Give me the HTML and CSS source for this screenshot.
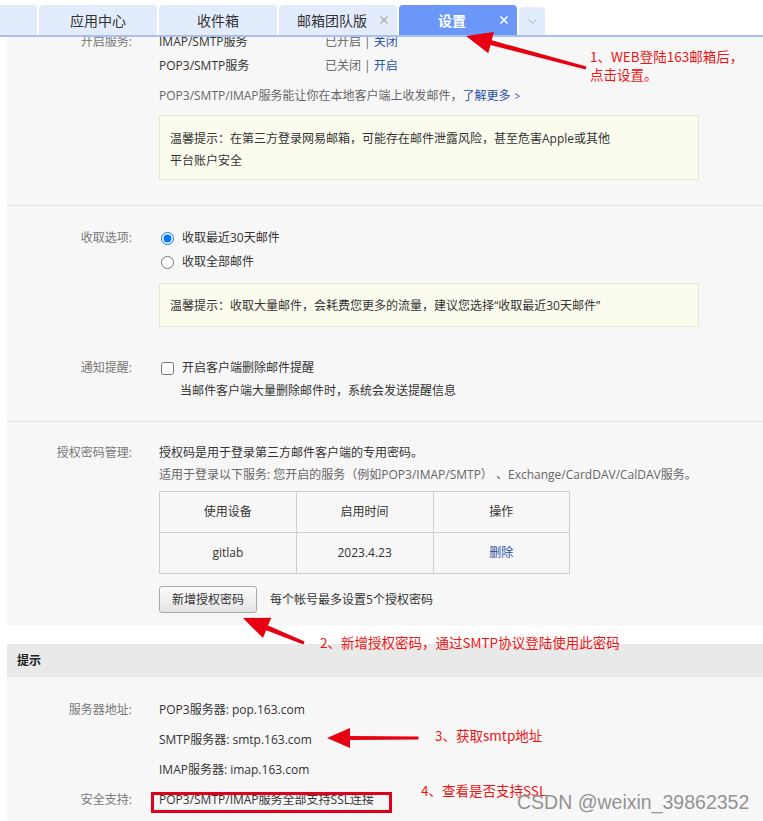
FILE: index.html
```html
<!DOCTYPE html>
<html lang="zh-CN">
<head>
  <meta charset="UTF-8">
  <title>设置 - 客户端授权</title>
  <link rel="stylesheet" href="styles.css">
</head>
<body>
<div class="page">
  <div class="tabbar">
    <div class="tab tab-cut"></div>
    <div class="tab"><span class="tab-name">应用中心</span></div>
    <div class="tab"><span class="tab-name">收件箱</span></div>
    <div class="tab closable">
      <span class="tab-name">邮箱团队版</span>
      <svg class="tab-x" width="8" height="8" viewBox="0 0 8 8"><path d="M0.5 0.5L7.5 7.5M7.5 0.5L0.5 7.5"/></svg>
    </div>
    <div class="tab closable active">
      <span class="tab-name">设置</span>
      <svg class="tab-x" width="8" height="8" viewBox="0 0 8 8"><path d="M0.5 0.5L7.5 7.5M7.5 0.5L0.5 7.5"/></svg>
    </div>
    <div class="tab-more">
      <svg width="9" height="5" viewBox="0 0 9 5"><path d="M0.5 0.5L4.5 4.5L8.5 0.5"/></svg>
    </div>
  </div>

  <div class="panel">
    <div class="section sec-service">
      <div class="row">
        <div class="label">开启服务:</div>
        <div class="value">
          <div class="svc"><span class="svc-name">IMAP/SMTP服务</span><span class="svc-state">已开启 | <a class="link">关闭</a></span></div>
          <div class="svc"><span class="svc-name">POP3/SMTP服务</span><span class="svc-state">已关闭 | <a class="link">开启</a></span></div>
          <div class="desc">POP3/SMTP/IMAP服务能让你在本地客户端上收发邮件，<a class="link">了解更多</a><span class="more">&gt;</span></div>
          <div class="tip tip-risk">温馨提示：在第三方登录网易邮箱，可能存在邮件泄露风险，甚至危害Apple或其他<br>平台账户安全</div>
        </div>
      </div>
    </div>

    <div class="section sec-fetch">
      <div class="row">
        <div class="label">收取选项:</div>
        <div class="value">
          <label class="opt"><input type="radio" name="fetch" checked>收取最近30天邮件</label>
          <label class="opt"><input type="radio" name="fetch">收取全部邮件</label>
          <div class="tip tip-fetch">温馨提示：收取大量邮件，会耗费您更多的流量，建议您选择“收取最近30天邮件”</div>
        </div>
      </div>
      <div class="row notify-row">
        <div class="label">通知提醒:</div>
        <div class="value">
          <label class="opt"><input type="checkbox">开启客户端删除邮件提醒</label>
          <div class="hint">当邮件客户端大量删除邮件时，系统会发送提醒信息</div>
        </div>
      </div>
    </div>

    <div class="section sec-auth">
      <div class="row">
        <div class="label">授权密码管理:</div>
        <div class="value">
          <div>授权码是用于登录第三方邮件客户端的专用密码。</div>
          <div class="muted">适用于登录以下服务: 您开启的服务（例如POP3/IMAP/SMTP） 、Exchange/CardDAV/CalDAV服务。</div>
          <table class="auth-table">
            <tr><td>使用设备</td><td>启用时间</td><td>操作</td></tr>
            <tr><td>gitlab</td><td>2023.4.23</td><td><a class="link">删除</a></td></tr>
          </table>
          <div class="add-row">
            <button class="btn">新增授权密码</button>
            <span>每个帐号最多设置5个授权密码</span>
          </div>
        </div>
      </div>
    </div>
  </div>

  <div class="tips-head">提示</div>
  <div class="panel sec-server">
    <div class="row">
      <div class="label">服务器地址:</div>
      <div class="value">
        <div>POP3服务器: pop.163.com</div>
        <div>SMTP服务器: smtp.163.com</div>
        <div>IMAP服务器: imap.163.com</div>
      </div>
    </div>
    <div class="row">
      <div class="label">安全支持:</div>
      <div class="value">POP3/SMTP/IMAP服务全部支持SSL连接</div>
    </div>
  </div>

  <!-- annotations drawn over the screenshot -->
  <svg class="arrows" width="763" height="821" viewBox="0 0 763 821">
    <polygon points="586.4,66.6 491.7,40.3 493.9,32.1 466,36 488.3,53.3 490.5,45.1 585.6,69.4"/>
    <polygon points="304.6,641.6 268,625.6 271.3,617.7 243,618 262.9,638.1 266.2,630.2 303.4,644.4"/>
    <polygon points="418.5,736.5 350,736 350,728 327,738 350,748 350,740 418.5,739.5"/>
  </svg>
  <div class="note note-1">1、WEB登陆163邮箱后，<br>点击设置。</div>
  <div class="note note-2">2、新增授权密码，通过SMTP协议登陆使用此密码</div>
  <div class="note note-3">3、获取smtp地址</div>
  <div class="note note-4">4、查看是否支持SSL</div>
  <div class="mark-box"></div>
  <div class="watermark">CSDN @weixin_39862352</div>
</div>
</body>
</html>
```

FILE: styles.css
```css
body {
  margin: 0;
  background: #fff;
  font-family: "Open Sans", "Noto Sans CJK SC", sans-serif;
  font-size: 12px;
  color: #333;
}
.page {
  position: relative;
  width: 763px;
  height: 821px;
  overflow: hidden;
}

/* tab bar, lies over the scrolled content */
.tabbar {
  position: absolute;
  top: 0;
  left: 0;
  right: 0;
  height: 35px;
  background: #fff;
  border-bottom: 2px solid #a8c0ec;
  display: flex;
  align-items: flex-end;
  gap: 2px;
  z-index: 2;
}
.tab {
  width: 118px;
  height: 30px;
  flex-shrink: 0;
  display: flex;
  align-items: center;
  background: #e3ecfd;
  border-radius: 4px 4px 0 0;
  font-family: "Noto Sans CJK SC", sans-serif;
  font-size: 14px;
  color: #333;
}
.tab-cut {
  width: 37px;
  border-top-left-radius: 0;
}
.tab-name {
  flex: 1;
  text-align: center;
}
.closable .tab-name {
  padding-left: 8px;
}
.tab-x {
  margin: 0 9px 0 3px;
  fill: none;
  stroke: #aaa;
  stroke-width: 1.2;
}
.tab.active {
  background: #6b98f8;
  color: #fff;
  font-weight: bold;
}
.tab.active .tab-x {
  stroke: #fff;
  stroke-width: 1.5;
}
.tab-more {
  width: 26px;
  height: 28px;
  flex-shrink: 0;
  display: flex;
  align-items: center;
  justify-content: center;
  background: #e3ecfd;
  border-radius: 4px 4px 0 0;
}
.tab-more svg {
  fill: none;
  stroke: #9eabc6;
  stroke-width: 1;
}

/* content */
.panel {
  margin-left: 7px;
  background: #f7f7f7;
}
.row {
  display: grid;
  grid-template-columns: 125px 1fr;
  column-gap: 27px;
  line-height: 24px;
}
.label {
  text-align: right;
  color: #777;
}
.link {
  color: #1e4ea6;
  text-decoration: none;
}
.muted {
  color: #666;
}

.sec-service {
  padding: 30px 0 25px;
  border-bottom: 1px solid #e4e4e4;
}
.svc-name {
  display: inline-block;
  width: 166px;
}
.svc-state {
  color: #666;
}
.desc {
  margin-top: 6px;
  color: #666;
}
.more {
  margin-left: 4px;
  font-size: 10px;
  color: #1e4ea6;
}
.tip {
  width: 540px;
  box-sizing: border-box;
  border: 1px solid #e8e7cc;
  background: #fcfcee;
  line-height: 22px;
  color: #333;
}
.tip-risk {
  margin-top: 7px;
  padding: 12px 10px 7px;
}

.sec-fetch {
  padding: 20px 0 19px;
  border-bottom: 1px solid #e4e4e4;
}
.opt {
  display: flex;
  align-items: center;
  height: 24px;
}
.opt input {
  width: 13px;
  height: 13px;
  margin: 0 8px 0 2px;
}
.tip-fetch {
  margin-top: 9px;
  padding: 11px 10px 9px;
}
.notify-row {
  margin-top: 29px;
}
.hint {
  padding-left: 21px;
  line-height: 22px;
}

.sec-auth {
  padding: 20px 0 12px;
}
.sec-auth .row {
  line-height: 22px;
}
.auth-table {
  margin-top: 5px;
  width: 411px;
  border-collapse: collapse;
}
.auth-table tr {
  height: 41px;
}
.auth-table td {
  width: 137px;
  padding: 0;
  border: 1px solid #d0d0d0;
  text-align: center;
}
.add-row {
  margin-top: 12px;
  display: flex;
  align-items: center;
  gap: 13px;
}
.btn {
  height: 27px;
  padding: 0 12px;
  border: 1px solid #a9a9a9;
  border-radius: 3px;
  background: linear-gradient(#fdfdfd, #e3e3e3);
  font: inherit;
  color: #333;
}

.tips-head {
  margin: 19px 0 0 7px;
  height: 33px;
  line-height: 33px;
  padding-left: 10px;
  background: #e9e9e9;
  font-weight: bold;
  color: #222;
}
.sec-server {
  padding: 18px 0 40px;
}
.sec-server .row {
  line-height: 30px;
}

/* annotations */
.arrows {
  position: absolute;
  top: 0;
  left: 0;
  fill: #e60012;
  z-index: 3;
}
.note {
  position: absolute;
  font-family: "Noto Sans CJK SC", sans-serif;
  font-size: 13.5px;
  line-height: 18px;
  color: #f01414;
  white-space: nowrap;
  z-index: 3;
}
.note-1 { left: 590px; top: 48px; line-height: 17.5px; }
.note-2 { left: 320px; top: 633px; }
.note-3 { left: 435px; top: 726px; }
.note-4 { left: 421px; top: 781px; }
.mark-box {
  position: absolute;
  left: 151px;
  top: 792px;
  width: 241px;
  height: 21px;
  box-sizing: border-box;
  border: 3px solid #e0001b;
}
.watermark {
  position: absolute;
  left: 517px;
  top: 790px;
  font-family: "Liberation Sans", Arial, sans-serif;
  font-size: 19.5px;
  line-height: 24px;
  color: #939393;
  z-index: 3;
}
```
